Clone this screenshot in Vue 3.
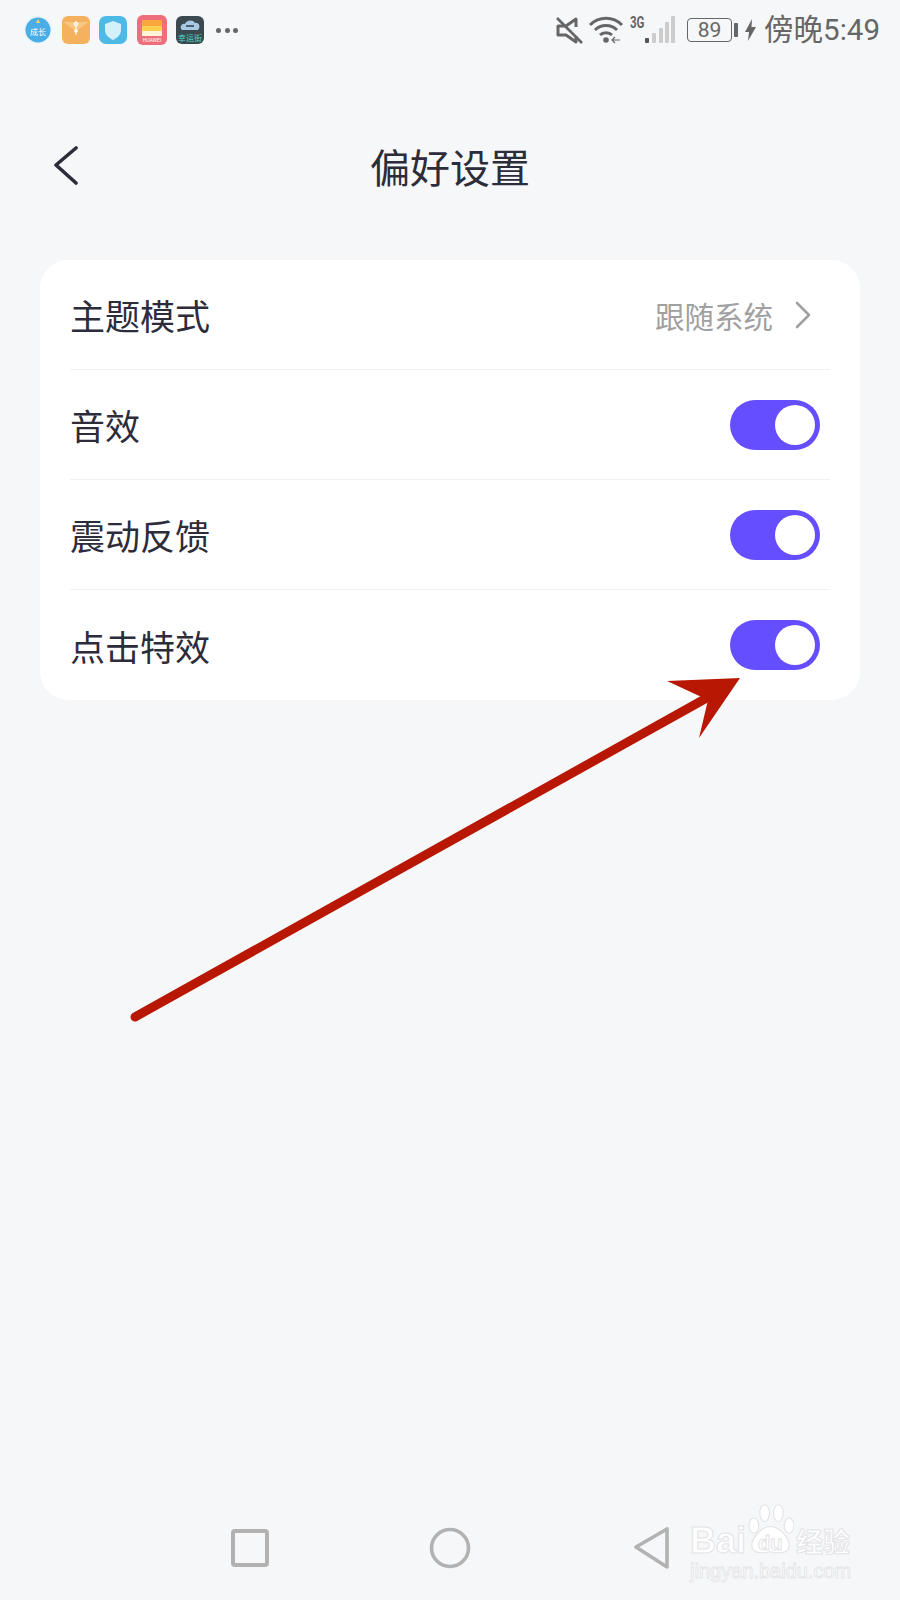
<script setup>
const rows = [
  { label: '主题模式', value: '跟随系统' },
  { label: '音效', on: true },
  { label: '震动反馈', on: true },
  { label: '点击特效', on: true }
];
</script>

<template>
  <div class="page">
    <div class="status-bar">
      <div class="status-left">
        <svg width="28" height="28" viewBox="0 0 28 28">
          <circle cx="14" cy="14" r="14" fill="#e8f5fb" />
          <circle cx="14" cy="14" r="12.5" fill="#4aade6" />
          <path d="M14 3l2 4h-4z" fill="#f4d76a" />
          <text x="14" y="19" text-anchor="middle" class="tiny" fill="#fff">成长</text>
        </svg>
        <svg width="28" height="28" viewBox="0 0 28 28">
          <rect width="28" height="28" rx="6" fill="#f4b25e" />
          <path d="M1 6l13 9 13-9" fill="#f7c884" />
          <path d="M14 5v14" stroke="#fff" stroke-width="1" />
          <circle cx="14" cy="8" r="1.8" fill="none" stroke="#fff" />
          <circle cx="14" cy="15" r="1.8" fill="#fff" />
        </svg>
        <svg width="28" height="28" viewBox="0 0 28 28">
          <rect width="28" height="28" rx="7" fill="#4cb9e6" />
          <path d="M14 5l8 3v6c0 5-4 8-8 10-4-2-8-5-8-10V8z" fill="#d3f0fb" />
        </svg>
        <svg width="30" height="30" viewBox="0 0 30 30">
          <rect width="30" height="30" rx="6" fill="#ee6f7b" />
          <rect x="5" y="5" width="20" height="6" fill="#f9a63a" />
          <rect x="5" y="11" width="20" height="5" fill="#fcd04f" />
          <rect x="5" y="16" width="20" height="5" fill="#fff3d8" />
          <text x="15" y="27" text-anchor="middle" class="micro" fill="#fff">HUAWEI</text>
        </svg>
        <svg width="28" height="28" viewBox="0 0 28 28">
          <rect width="28" height="28" rx="6" fill="#3a4a50" />
          <path d="M6 14c-3-3 0-7 3-6 1-4 8-5 10-1 4-1 6 4 3 7z" fill="#a8c8e4" />
          <rect x="10" y="9" width="8" height="2" fill="#4c6070" />
          <text x="14" y="25" text-anchor="middle" class="tiny" fill="#4fd8c8">幸运街</text>
        </svg>
        <span class="more"><i></i><i></i><i></i></span>
      </div>

      <div class="status-right">
        <svg class="ic-mute" width="28" height="28" viewBox="0 0 28 28" fill="none" stroke="#666" stroke-width="3">
          <path d="M21 11V3L11 10H3v9h8l10 7v-6" stroke-linejoin="round" />
          <path d="M2 2l25 25" stroke-width="2.6" />
        </svg>
        <svg class="ic-wifi" width="34" height="28" viewBox="0 0 34 28" fill="none" stroke="#666" stroke-width="3">
          <path d="M1 9c9-9 23-9 32 0" />
          <path d="M6 14c6-6 16-6 22 0" />
          <path d="M11 19c3-3 9-3 12 0" />
          <circle cx="17" cy="24" r="2.8" fill="#666" stroke="none" />
          <path d="M24 24h7M26 21l-3 3 3 3" stroke-width="1.2" />
        </svg>
        <div class="signal-wrap">
          <span class="net">3G</span>
          <svg width="30" height="28" viewBox="0 0 30 28">
            <rect x="0" y="22" width="4" height="5" rx="1" fill="#555" />
            <rect x="7" y="17" width="4" height="10" rx="1" fill="#ccc" />
            <rect x="14" y="12" width="4" height="15" rx="1" fill="#ccc" />
            <rect x="20" y="6" width="4" height="21" rx="1" fill="#ccc" />
            <rect x="26" y="0" width="4" height="27" rx="1" fill="#ccc" />
          </svg>
        </div>
        <div class="battery">89</div>
        <span class="nub"></span>
        <svg class="ic-bolt" width="11" height="22" viewBox="0 0 11 22">
          <path d="M7 0L0 13h4l-1 9 8-14H6.500z" fill="#666" />
        </svg>
        <span class="clock">傍晚5:49</span>
      </div>
    </div>

    <header class="topbar">
      <svg class="back" width="26" height="40" viewBox="0 0 26 40" fill="none" stroke="#2c2c3a" stroke-width="3.6" stroke-linecap="round" stroke-linejoin="round">
        <path d="M23 2L3 19l20 18" />
      </svg>
      <h1>偏好设置</h1>
    </header>

    <section class="card">
      <div v-for="row in rows" :key="row.label" class="row">
        <span class="label">{{ row.label }}</span>
        <span v-if="row.value" class="value">
          {{ row.value }}
          <svg width="16" height="28" viewBox="0 0 16 28" fill="none" stroke="#a0a0a0" stroke-width="2.6" stroke-linecap="round" stroke-linejoin="round">
            <path d="M2 2l12 12L2 26" />
          </svg>
        </span>
        <span v-else class="toggle"><i></i></span>
      </div>
    </section>

    <nav class="navbar">
      <div class="nav-item">
        <svg width="40" height="42" viewBox="0 0 40 42" fill="none" stroke="#b2b2b2" stroke-width="4">
          <rect x="3" y="4" width="34" height="34" rx="2" />
        </svg>
      </div>
      <div class="nav-item">
        <svg width="42" height="42" viewBox="0 0 42 42" fill="none" stroke="#b2b2b2" stroke-width="3.6">
          <circle cx="21" cy="21" r="18.500" />
        </svg>
      </div>
      <div class="nav-item">
        <svg width="42" height="42" viewBox="0 0 42 42" fill="none" stroke="#b2b2b2" stroke-width="3.6" stroke-linejoin="round">
          <path d="M38 2v38L7 20z" />
        </svg>
      </div>
    </nav>

    <svg class="arrow" width="900" height="1600" viewBox="0 0 900 1600">
      <path d="M135 1017L712 695" stroke="#b81803" stroke-width="9" stroke-linecap="round" />
      <path d="M740 678L667 681 708 700 699 738z" fill="#b81803" />
    </svg>

    <div class="watermark">
      <div class="wm-top">
        <span class="wm-bai">Bai</span>
        <svg class="wm-paw" width="47" height="52" viewBox="0 0 48 62" preserveAspectRatio="none" fill="#fff" stroke="#e3e3e6" stroke-width="1.2">
          <ellipse cx="7" cy="27" rx="5" ry="9" />
          <ellipse cx="18" cy="12" rx="5" ry="10" />
          <ellipse cx="32" cy="12" rx="5" ry="10" />
          <ellipse cx="43" cy="27" rx="5" ry="9" />
          <path d="M24 28c9 0 20 14 19 24-1 9-12 8-19 6-7 2-18 3-19-6-1-10 10-24 19-24z" />
        </svg>
        <span class="wm-du">du</span>
        <span class="wm-cn">经验</span>
      </div>
      <div class="wm-url">jingyan.baidu.com</div>
    </div>
  </div>
</template>

<style>
body {
  margin: 0;
  background: #f6f7f9;
}
</style>

<style scoped>
.page {
  position: relative;
  width: 900px;
  height: 1600px;
  display: flex;
  flex-direction: column;
  overflow: hidden;
  background: #f6f7f9;
  font-family: Roboto, "Noto Sans CJK SC", sans-serif;
}

.status-bar {
  height: 60px;
  padding: 0 20px 0 24px;
  display: flex;
  align-items: center;
  justify-content: space-between;
  box-sizing: border-box;
  color: #666;
}

.status-left {
  display: flex;
  align-items: center;
  gap: 9.5px;
}

.tiny {
  font-size: 8px;
  font-family: "Noto Sans CJK SC", sans-serif;
}

.micro {
  font-size: 5px;
}

.more {
  display: flex;
  gap: 3.5px;
  margin-left: 2.5px;
}

.more i {
  width: 5px;
  height: 5px;
  border-radius: 50%;
  background: #666;
}

.status-right {
  display: flex;
  align-items: center;
}

.ic-wifi {
  margin-left: 6px;
}

.signal-wrap {
  display: flex;
  align-items: center;
  margin-left: 7px;
}

.net {
  font-size: 16px;
  font-weight: 700;
  line-height: 14px;
  width: 15px;
  align-self: flex-start;
  transform: scaleX(0.72);
  transform-origin: left;
}

.battery {
  width: 45px;
  height: 24px;
  margin-left: 12px;
  border: 1.2px solid #666;
  border-radius: 4px;
  box-sizing: border-box;
  font-size: 21px;
  line-height: 22px;
  text-align: center;
}

.nub {
  width: 4px;
  height: 14px;
  margin-left: 2px;
  border-radius: 1px;
  background: #666;
}

.ic-bolt {
  margin-left: 7px;
}

.clock {
  margin-left: 8px;
  font-size: 29.5px;
  line-height: 34px;
  color: #666;
}

.topbar {
  position: relative;
  height: 80px;
  margin-top: 66px;
  margin-bottom: 54px;
  padding-left: 53px;
  display: flex;
  align-items: center;
}

.back {
  margin-top: -1px;
}

.topbar h1 {
  position: absolute;
  left: 0;
  right: 0;
  margin: 0;
  text-align: center;
  font-size: 40px;
  font-weight: 400;
  color: #2c2c3a;
}

.card {
  margin: 0 40px;
  padding: 0 30px;
  border-radius: 28px;
  background: #fff;
}

.row {
  height: 110px;
  padding-right: 10px;
  display: flex;
  align-items: center;
  justify-content: space-between;
  box-sizing: border-box;
  border-bottom: 1px solid #f1f1f3;
}

.row:last-child {
  border-bottom: none;
}

.label {
  font-size: 35px;
  color: #2c2c3a;
}

.value {
  display: flex;
  align-items: center;
  gap: 22px;
  margin-right: 9px;
  font-size: 29.5px;
  color: #a0a0a0;
}

.toggle {
  position: relative;
  width: 90px;
  height: 50px;
  border-radius: 25px;
  background: #654eff;
}

.toggle i {
  position: absolute;
  top: 5px;
  right: 5px;
  width: 40px;
  height: 40px;
  border-radius: 50%;
  background: #fff;
}

.navbar {
  margin-top: auto;
  padding-bottom: 31px;
  display: flex;
  justify-content: center;
}

.nav-item {
  width: 200px;
  display: flex;
  justify-content: center;
}

.arrow {
  position: absolute;
  top: 0;
  left: 0;
  pointer-events: none;
}

.watermark {
  position: absolute;
  left: 690px;
  top: 1503px;
  width: 165px;
  color: #fff;
  font-family: "Liberation Sans", "Noto Sans CJK SC", sans-serif;
}

.wm-top {
  position: relative;
  height: 56px;
}

.wm-bai,
.wm-du,
.wm-cn {
  position: absolute;
  font-weight: 700;
  -webkit-text-stroke: 1px #e3e3e6;
}

.wm-bai {
  left: 0;
  top: 18px;
  font-size: 36px;
  line-height: 40px;
}

.wm-paw {
  position: absolute;
  left: 57px;
  top: 0;
}

.wm-du {
  left: 68px;
  top: 28px;
  font-size: 20px;
  line-height: 24px;
}

.wm-cn {
  left: 106px;
  top: 24px;
  font-size: 27px;
  line-height: 32px;
}

.wm-url {
  font-size: 20px;
  line-height: 24px;
  -webkit-text-stroke: 0.8px #e3e3e6;
}
</style>
